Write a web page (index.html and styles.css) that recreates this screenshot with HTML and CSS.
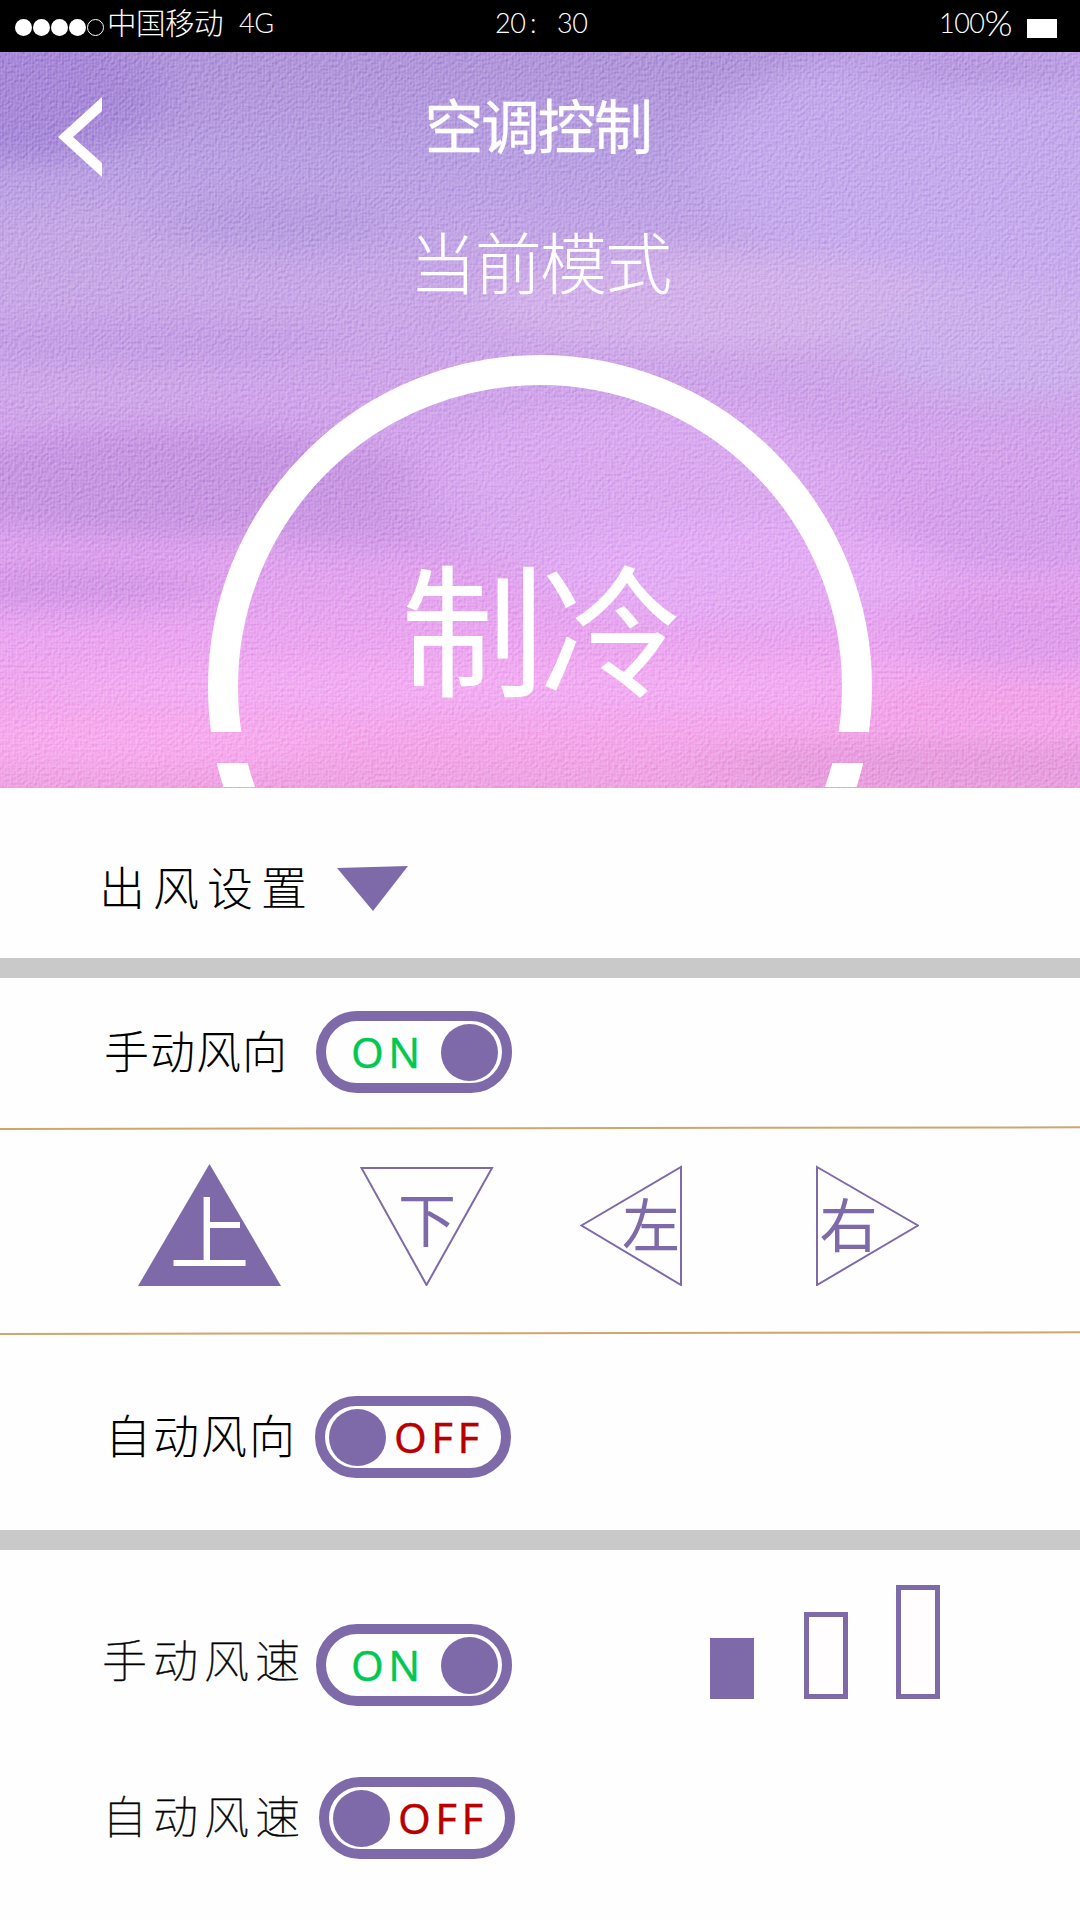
FILE: index.html
```html
<!DOCTYPE html>
<html lang="zh-CN">
<head>
<meta charset="utf-8">
<title>空调控制</title>
<link rel="stylesheet" href="styles.css">
</head>
<body>
<div class="screen">
  <header class="status">
    <div class="signal"><i></i><i></i><i></i><i></i><i class="empty"></i></div>
    <span class="carrier">中国移动</span>
    <span class="network">4G</span>
    <span class="clock"><span>20</span><span class="colon">:</span><span>30</span></span>
    <span class="charge">100<span class="percent">%</span></span>
    <span class="battery"></span>
  </header>

  <section class="hero">
    <svg class="sky" viewBox="0 0 1080 736" preserveAspectRatio="none" aria-hidden="true">
      <defs>
        <linearGradient id="base" x1="0" y1="0" x2="0" y2="1">
          <stop offset="0" stop-color="#af93d9"/>
          <stop offset=".15" stop-color="#b89fe2"/>
          <stop offset=".32" stop-color="#c8a7e7"/>
          <stop offset=".5" stop-color="#d1a3ea"/>
          <stop offset=".65" stop-color="#dba0ec"/>
          <stop offset=".8" stop-color="#eba5f0"/>
          <stop offset=".92" stop-color="#f5a7eb"/>
          <stop offset="1" stop-color="#efa2e2"/>
        </linearGradient>
        <filter id="soft" x="-50%" y="-50%" width="200%" height="200%">
          <feGaussianBlur stdDeviation="30 13"/>
        </filter>
        <filter id="weave" x="0" y="0" width="100%" height="100%" color-interpolation-filters="sRGB">
          <feTurbulence type="fractalNoise" baseFrequency=".3 .34" numOctaves="2" seed="7"/>
          <feDiffuseLighting surfaceScale="1.2" lighting-color="#fff" result="lit">
            <feDistantLight azimuth="225" elevation="32"/>
          </feDiffuseLighting>
          <feColorMatrix type="saturate" values="0"/>
        </filter>
        <pattern id="thread" width="6" height="6" patternUnits="userSpaceOnUse">
          <path d="M1.5 0V6M4.5 0V6" stroke="#fff" stroke-opacity=".08"/>
          <path d="M0 2.5H6" stroke="#7a4aa8" stroke-opacity=".05"/>
        </pattern>
      </defs>
      <rect width="1080" height="736" fill="url(#base)"/>
      <g filter="url(#soft)">
        <ellipse cx="20" cy="40" rx="140" ry="70" fill="#a383d6" opacity=".8"/>
        <ellipse cx="1000" cy="110" rx="300" ry="130" fill="#c7abee" opacity=".8"/>
        <ellipse cx="980" cy="15" rx="120" ry="18" fill="#b596df"/>
        <ellipse cx="110" cy="200" rx="150" ry="45" fill="#c6a6e4" opacity=".7"/>
        <ellipse cx="270" cy="170" rx="120" ry="30" fill="#b398de" opacity=".6"/>
        <ellipse cx="720" cy="250" rx="240" ry="50" fill="#d5b3ea" opacity=".8"/>
        <ellipse cx="120" cy="290" rx="220" ry="24" fill="#c09be3" opacity=".7"/>
        <ellipse cx="1010" cy="290" rx="150" ry="60" fill="#cbb0ec" opacity=".8"/>
        <ellipse cx="100" cy="340" rx="110" ry="22" fill="#cda8e7" opacity=".8"/>
        <ellipse cx="170" cy="430" rx="260" ry="54" fill="#c493e0" opacity=".85"/>
        <ellipse cx="370" cy="460" rx="140" ry="34" fill="#ca96e3" opacity=".8"/>
        <ellipse cx="640" cy="440" rx="220" ry="90" fill="#dbaaf0" opacity=".8"/>
        <ellipse cx="60" cy="535" rx="150" ry="22" fill="#cd92e2" opacity=".7"/>
        <ellipse cx="1020" cy="470" rx="110" ry="50" fill="#d29eea" opacity=".7"/>
        <ellipse cx="740" cy="520" rx="200" ry="50" fill="#e5adf5" opacity=".8"/>
        <ellipse cx="1030" cy="580" rx="120" ry="40" fill="#dd9bea" opacity=".8"/>
        <ellipse cx="500" cy="635" rx="460" ry="24" fill="#f2aef2" opacity=".8"/>
        <ellipse cx="140" cy="690" rx="200" ry="26" fill="#f7abed" opacity=".8"/>
        <ellipse cx="980" cy="650" rx="140" ry="22" fill="#f2a1e6" opacity=".8"/>
        <ellipse cx="950" cy="715" rx="240" ry="26" fill="#e79bdd" opacity=".9"/>
      </g>
      <rect class="grain" width="1080" height="736" filter="url(#weave)"/>
      <rect width="1080" height="736" fill="url(#thread)"/>
      <g class="ring">
        <clipPath id="cut"><path d="M0 0H1080V680H0zM0 711H1080V735H0z"/></clipPath>
        <circle cx="540" cy="635" r="317" clip-path="url(#cut)"/>
      </g>
    </svg>
    <svg class="back" viewBox="0 0 44 80" aria-label="返回"><path d="M44 0V14L15 40L44 66V80L0 40Z"/></svg>
    <h1 class="title">空调控制</h1>
    <p class="caption">当前模式</p>
    <p class="mode">制冷</p>
  </section>

  <section class="panel outlet">
    <span class="label">出风设置</span>
    <svg class="expand" viewBox="0 0 71 45"><path d="M0 2L71 0L36 45Z"/></svg>
  </section>

  <section class="panel manual-direction">
    <span class="label">手动风向</span>
    <span class="toggle on"><b>ON</b><i></i></span>
  </section>

  <svg class="rule" viewBox="0 0 1080 4"><path d="M0 3L1080 1.3"/></svg>

  <section class="directions">
    <svg class="dir up" viewBox="0 0 144 126"><path d="M71.500 4L143 126H0Z"/><text x="31.500" y="103">上</text></svg>
    <svg class="dir down" viewBox="0 0 134 126"><path d="M1.5 8H132L66.500 125Z"/><text x="38" y="82">下</text></svg>
    <svg class="dir left" viewBox="0 0 104 126"><path d="M101 7V125L1.500 65.500Z"/><text x="42" y="87">左</text></svg>
    <svg class="dir right" viewBox="0 0 104 126"><path d="M2 7L103 65.500L2 125Z"/><text x="4.500" y="87">右</text></svg>
  </section>

  <svg class="rule" viewBox="0 0 1080 4"><path d="M0 3L1080 1.3"/></svg>

  <section class="panel auto-direction">
    <span class="label">自动风向</span>
    <span class="toggle off"><i></i><b>OFF</b></span>
  </section>

  <section class="panel manual-speed">
    <span class="label">手动风速</span>
    <span class="toggle on"><b>ON</b><i></i></span>
    <div class="levels"><i class="low"></i><i class="mid"></i><i class="high"></i></div>
  </section>

  <section class="panel auto-speed">
    <span class="label">自动风速</span>
    <span class="toggle off"><i></i><b>OFF</b></span>
  </section>
</div>
</body>
</html>
```
FILE: styles.css
```css
* { box-sizing: border-box; }
body { margin: 0; background: #fefefe; }
h1, p { margin: 0; font-weight: 400; }
svg { display: block; }

.screen {
  width: 1080px;
  height: 1920px;
  overflow: hidden;
  font-family: "Noto Sans CJK SC", sans-serif;
  color: #000;
}

/* status bar */
.status {
  display: flex;
  align-items: flex-start;
  height: 52px;
  padding-left: 15px;
  background: #000;
  color: #fff;
  font: 300 27px/27px Lato, sans-serif;
  letter-spacing: -.5px;
  white-space: nowrap;
}
.signal { display: flex; gap: 1px; width: 92px; padding-top: 19px; }
.signal i { width: 17px; height: 17px; border-radius: 50%; background: #fff; }
.signal .empty { background: none; border: 1px solid #fff; }
.carrier {
  width: 132px;
  padding-top: 6px;
  font: 300 29.500px/30px "Noto Sans CJK SC", sans-serif;
}
.network { width: 256px; padding-top: 9px; }
.clock { display: flex; width: 444px; padding-top: 9px; }
.clock .colon { width: 31px; padding-left: 4px; }
.clock span:first-child { width: 31px; }
.charge { display: flex; width: 88px; padding-top: 9px; }
.percent { font-size: 36px; }
.battery { width: 30px; height: 19px; margin-top: 19px; background: #fff; }

/* current mode */
.hero {
  position: relative;
  display: flex;
  flex-direction: column;
  align-items: center;
  height: 736px;
  padding-top: 42px;
  color: #fff;
}
.sky { position: absolute; inset: 0; width: 1080px; height: 736px; }
.grain { mix-blend-mode: soft-light; opacity: .5; }
.ring circle { fill: none; stroke: #fff; stroke-width: 30; }
.back { position: absolute; left: 58px; top: 45px; width: 44px; height: 80px; fill: #fff; }
.title, .caption, .mode { position: relative; }
.title { margin-right: 5px; font-size: 59px; line-height: 60px; letter-spacing: -2.500px; -webkit-text-stroke: .3px #fff; }
.caption { margin-top: 72px; font-size: 67px; line-height: 67px; letter-spacing: -1.700px; font-weight: 300; }
.mode { margin-top: 259px; font-size: 143px; line-height: 144px; letter-spacing: -4px; }

/* setting rows */
.panel { display: flex; align-items: flex-start; }
.label { flex: none; font-size: 45px; line-height: 45px; font-weight: 300; white-space: nowrap; }

.outlet { height: 190px; padding: 75px 0 0 99px; border-bottom: 20px solid #c9c9c9; }
.outlet .label { width: 238px; font-size: 46px; letter-spacing: 8px; }
.expand { width: 71px; height: 45px; margin-top: 3px; fill: #7e69a9; }

.manual-direction { height: 148px; padding: 33px 0 0 104px; }
.manual-direction .label { width: 212px; padding-top: 16px; letter-spacing: 1px; }

.auto-direction { height: 215px; padding: 61px 0 0 105px; border-bottom: 20px solid #c9c9c9; }
.auto-direction .label { width: 210px; padding-top: 15px; font-size: 46px; letter-spacing: 2px; }

.manual-speed { height: 195px; padding: 35px 0 0 102px; }
.manual-speed .label { width: 214px; padding-top: 51px; letter-spacing: 6px; }
.manual-speed .toggle { margin-top: 39px; }

.auto-speed { height: 175px; padding: 32px 0 0 102px; }
.auto-speed .label { width: 217px; padding-top: 15px; letter-spacing: 6px; }
.manual-speed .label, .auto-speed .label { font-weight: 100; -webkit-text-stroke: .5px #000; }

.toggle {
  display: flex;
  align-items: center;
  width: 196px;
  height: 82px;
  border: 10px solid #7e69a9;
  border-radius: 41px;
  font: 400 42px/42px "Noto Sans", sans-serif;
  letter-spacing: 4.500px;
}
.toggle b { font-weight: 400; -webkit-text-stroke: .3px currentColor; }
.toggle i { width: 57px; height: 57px; border-radius: 50%; background: #7e69a9; }
.on { justify-content: space-between; padding: 0 4px 0 25px; color: #00c853; }
.off { gap: 8px; padding-left: 4px; color: #b80000; }

.rule { width: 1080px; height: 4px; }
.rule path { fill: none; stroke: #cfa66d; stroke-width: 2; }

.directions { display: flex; height: 201px; padding: 30px 0 0 138px; }
.dir { height: 126px; fill: #7e69a9; }
.dir text { font-size: 58px; }
.up { width: 144px; margin-right: 78px; }
.dir.up text { fill: #fff; font-size: 80px; }
.down path, .left path, .right path { fill: none; stroke: #7e69a9; stroke-width: 2; }
.down { width: 134px; margin-right: 86px; }
.left { width: 104px; margin-right: 131px; }
.right { width: 104px; }

/* fan speed levels */
.levels { display: flex; align-items: flex-end; height: 114px; margin-left: 198px; }
.levels i { width: 44px; border: 5px solid #7e69a9; background: #fffdfe; }
.low { height: 61px; margin-right: 50px; }
.levels .low { background: #7e69a9; }
.mid { height: 87px; margin-right: 48px; }
.high { height: 114px; }
```
